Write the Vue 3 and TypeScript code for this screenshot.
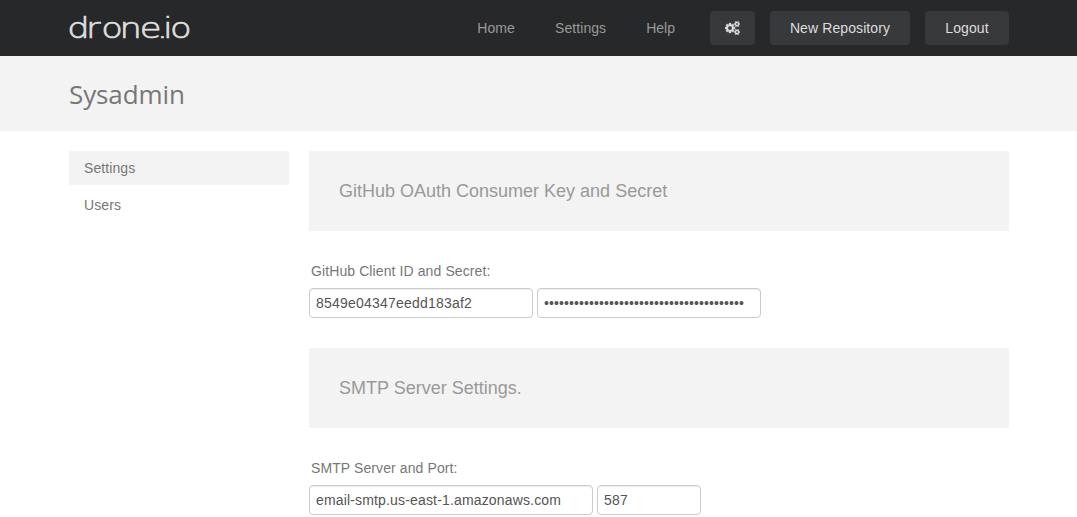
<script setup lang="ts">
import { ref } from 'vue'

interface NavLink { label: string; kind: string }

const links: NavLink[] = [
  { label: 'Home', kind: 'home' },
  { label: 'Settings', kind: 'settings' },
  { label: 'Help', kind: 'help' },
]
const menu: string[] = ['Settings', 'Users']
const active = ref('Settings')
const clientId = ref('8549e04347eedd183af2')
const clientSecret = ref('x'.repeat(40))
const smtpServer = ref('email-smtp.us-east-1.amazonaws.com')
const smtpPort = ref('587')
</script>

<template>
  <div class="page">
    <header class="navbar">
      <div class="container bar">
        <svg class="logo" width="124" height="56" viewBox="0 0 124 56" role="img" aria-label="drone.io">
          <text class="wordmark" transform="scale(1.22 1)" x="-1.4 14 26.5 41.4 58 71.9 77.1 82.8" y="37.6">drone.io</text>
        </svg>
        <nav class="links">
          <a v-for="l in links" :key="l.label" :class="l.kind">{{ l.label }}</a>
        </nav>
        <a class="btn gear" aria-label="System settings">
          <svg width="15" height="14" viewBox="0 0 1920 1792">
            <path d="M896 896q0-106-75-181t-181-75-181 75-75 181 75 181 181 75 181-75 75-181zm768 512q0-52-38-90t-90-38-90 38-38 90q0 53 37.5 90.5t90.5 37.5 90.5-37.5 37.5-90.5zm0-1024q0-52-38-90t-90-38-90 38-38 90q0 53 37.5 90.5t90.5 37.5 90.5-37.5 37.5-90.5zm-384 421v185q0 10-7 19.5t-16 10.5l-155 24q-11 35-32 76 34 48 90 115 7 11 7 20 0 12-7 19-23 30-82.5 89.5t-78.5 59.5q-11 0-21-7l-115-90q-37 19-77 31-11 108-23 155-7 24-30 24h-186q-11 0-20-7.5t-10-17.5l-23-153q-34-10-75-31l-118 89q-7 7-20 7-11 0-21-8-144-133-144-160 0-9 7-19 10-14 41-53t47-61q-23-44-35-82l-152-24q-10-1-17-9.5t-7-19.5v-185q0-10 7-19.5t16-10.5l155-24q11-35 32-76-34-48-90-115-7-11-7-20 0-12 7-20 22-30 82-89t79-59q11 0 21 7l115 90q34-18 77-32 11-108 23-154 7-24 30-24h186q11 0 20 7.5t10 17.5l23 153q34 10 75 31l118-89q8-7 20-7 11 0 21 8 144 133 144 160 0 8-7 19-12 16-42 54t-45 60q23 48 34 82l152 23q10 2 17 10.5t7 19.5zm640 533v140q0 16-149 31-12 27-30 52 51 113 51 138 0 4-4 7-122 71-124 71-8 0-46-47t-52-68q-20 2-30 2t-30-2q-14 21-52 68t-46 47q-2 0-124-71-4-3-4-7 0-25 51-138-18-25-30-52-149-15-149-31v-140q0-16 149-31 13-29 30-52-51-113-51-138 0-4 4-7 4-2 35-20t59-34 30-16q8 0 46 46.5t52 67.5q20-2 30-2t30 2q51-71 92-112l6-2q4 0 124 70 4 3 4 7 0 25-51 138 17 23 30 52 149 15 149 31zm0-1024v140q0 16-149 31-12 27-30 52 51 113 51 138 0 4-4 7-122 71-124 71-8 0-46-47t-52-68q-20 2-30 2t-30-2q-14 21-52 68t-46 47q-2 0-124-71-4-3-4-7 0-25 51-138-18-25-30-52-149-15-149-31v-140q0-16 149-31 13-29 30-52-51-113-51-138 0-4 4-7 4-2 35-20t59-34 30-16q8 0 46 46.5t52 67.5q20-2 30-2t30 2q51-71 92-112l6-2q4 0 124 70 4 3 4 7 0 25-51 138 17 23 30 52 149 15 149 31z" />
          </svg>
        </a>
        <a class="btn repo">New Repository</a>
        <a class="btn logout">Logout</a>
      </div>
    </header>

    <div class="subhead">
      <div class="container"><h1>Sysadmin</h1></div>
    </div>

    <div class="container content">
      <ul class="side">
        <li v-for="m in menu" :key="m" :class="{ active: m === active }" @click="active = m">{{ m }}</li>
      </ul>
      <main class="main">
        <section>
          <h2>GitHub OAuth Consumer Key and Secret</h2>
          <label>GitHub Client ID and Secret:</label>
          <div class="fields">
            <input v-model="clientId" class="medium key" type="text" spellcheck="false">
            <input v-model="clientSecret" class="medium secret" type="password">
          </div>
        </section>
        <section>
          <h2>SMTP Server Settings.</h2>
          <label>SMTP Server and Port:</label>
          <div class="fields">
            <input v-model="smtpServer" class="large" type="text" spellcheck="false">
            <input v-model="smtpPort" class="small" type="text">
          </div>
        </section>
      </main>
    </div>
  </div>
</template>

<style>
html, body { margin: 0; height: 517px; overflow: hidden; background: #fff; }
</style>

<style scoped>
.page { height: 517px; overflow: hidden; font: 14px/20px "Liberation Sans", Arial, sans-serif; color: #777; }
.container { width: 940px; margin-left: 69px; }
.navbar { height: 56px; background: #272829; }
.bar { display: flex; align-items: center; height: 56px; }
.logo { display: block; flex: none; overflow: visible; }
.wordmark { font-family: "DejaVu Sans Light", "DejaVu Sans", sans-serif; font-weight: 200; font-size: 29px; fill: #dedede; stroke: #dedede; stroke-width: .7px; }
.links { display: flex; gap: 40px; margin-left: auto; margin-right: 35px; color: #999; }
.links .home { letter-spacing: .1px; }
.links .settings { letter-spacing: .08px; }
.btn { display: flex; align-items: center; justify-content: center; box-sizing: border-box; height: 34px; border-radius: 4px; background: #38393a; color: #ddd; }
.btn svg { fill: #ddd; stroke: #ddd; stroke-width: 40; display: block; }
.gear { width: 45px; }
.repo { width: 140px; margin-left: 15px; letter-spacing: .1px; }
.logout { width: 84px; margin-left: 15px; letter-spacing: .1px; }
.subhead { height: 75px; background: #f3f3f3; }
h1 { margin: 0; padding-top: 18px; font: 400 26px/40px "Open Sans", sans-serif; letter-spacing: -.1px; color: #777; }
.content { display: flex; gap: 20px; padding-top: 20px; }
.side { list-style: none; width: 220px; margin: 0; padding: 0; }
.side li { height: 34px; box-sizing: border-box; padding: 7px 15px; margin-bottom: 3px; letter-spacing: .08px; }
.side .active { background: #f3f3f3; }
.main { width: 700px; }
section { margin-bottom: 30px; }
h2 { margin: 0 0 30px; height: 80px; box-sizing: border-box; padding: 30px; font-size: 18px; line-height: 20px; font-weight: 400; color: #999; background: #f3f3f3; }
label { display: block; margin: 0 0 7px 2px; letter-spacing: .1px; }
.fields { display: flex; gap: 4px; }
input { box-sizing: border-box; height: 30px; padding: 4px 6px; border: 1px solid #ccc; border-radius: 4px; background: #fff; box-shadow: inset 0 1px 1px rgba(0, 0, 0, .075); font: 14px/20px "Liberation Sans", Arial, sans-serif; letter-spacing: .16px; color: #555; outline: none; }
.key { letter-spacing: .21px; }
.secret { letter-spacing: .1px; }
.medium { width: 224px; }
.large { width: 284px; }
.small { width: 104px; }
</style>
